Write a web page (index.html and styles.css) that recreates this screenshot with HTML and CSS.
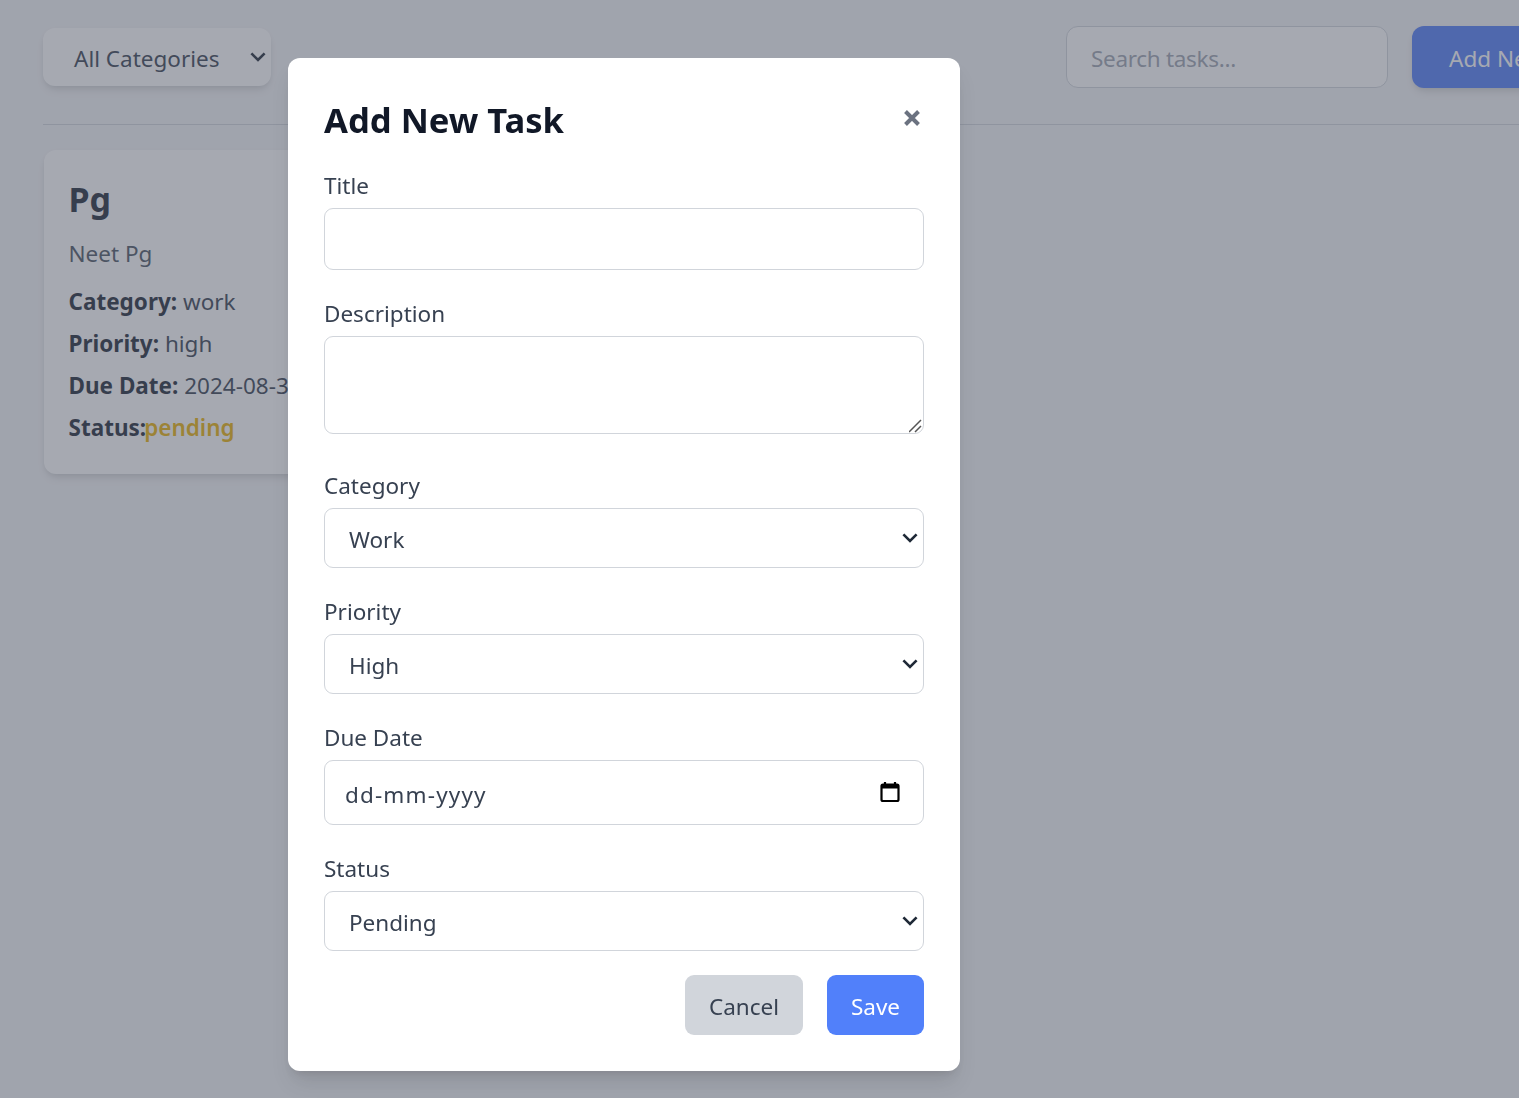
FILE: index.html
```html
<!DOCTYPE html>
<html lang="en">
<head>
<meta charset="UTF-8">
<meta name="viewport" content="width=device-width, initial-scale=1.0">
<title>Task Manager</title>
<link rel="stylesheet" href="styles.css">
</head>
<body>

<div id="app">
    <!-- Toolbar -->
    <div class="toolbar">
        <div class="filter">
            <span>All Categories</span>
            <svg class="chevron" viewBox="0 0 20 20"><path d="M4.500 7l5.500 5.500L15.500 7"/></svg>
        </div>
        <div class="toolbar-right">
            <input class="search" type="text" placeholder="Search tasks...">
            <button class="add-btn">Add New Task</button>
        </div>
    </div>

    <!-- Task list -->
    <div class="task-card">
        <h3>Pg</h3>
        <p class="task-desc">Neet Pg</p>
        <p class="task-line"><strong>Category:</strong> work</p>
        <p class="task-line"><strong>Priority:</strong> high</p>
        <p class="task-line"><strong>Due Date:</strong> 2024-08-31</p>
        <p class="task-line"><strong>Status:</strong><span class="status-pending">pending</span></p>
    </div>
</div>

<!-- Add task modal -->
<div id="modal-overlay">
    <div class="modal">
        <div class="modal-head">
            <h2>Add New Task</h2>
            <svg class="close" viewBox="0 0 18 18"><path d="M2.500 2.500l13 13M15.500 2.500l-13 13"/></svg>
        </div>

        <label for="title">Title</label>
        <input class="field title-field" id="title" type="text">

        <label for="description">Description</label>
        <div class="desc-wrap">
            <textarea class="field desc-field" id="description"></textarea>
            <svg class="resize-grip" viewBox="0 0 14 14"><path d="M0 13L12 1M6 13l6-6"/></svg>
        </div>

        <label>Category</label>
        <div class="select-box">
            <span>Work</span>
            <svg class="chevron" viewBox="0 0 20 20"><path d="M4.500 7l5.500 5.500L15.500 7"/></svg>
        </div>

        <label>Priority</label>
        <div class="select-box">
            <span>High</span>
            <svg class="chevron" viewBox="0 0 20 20"><path d="M4.500 7l5.500 5.500L15.500 7"/></svg>
        </div>

        <label>Due Date</label>
        <div class="date-box">
            <span class="date-text">dd-mm-yyyy</span>
            <svg class="calendar" viewBox="0 0 20 22"><path d="M5 1v3M15 1v3" class="cal-pin"/><rect x="1.500" y="3.500" width="17" height="16.500" rx="1.500" class="cal-body"/><rect x="1.500" y="3.500" width="17" height="4" class="cal-top"/></svg>
        </div>

        <label>Status</label>
        <div class="select-box">
            <span>Pending</span>
            <svg class="chevron" viewBox="0 0 20 20"><path d="M4.500 7l5.500 5.500L15.500 7"/></svg>
        </div>

        <div class="modal-actions">
            <button class="btn-cancel">Cancel</button>
            <button class="btn-save">Save</button>
        </div>
    </div>
</div>

</body>
</html>
```

FILE: styles.css
```css
* {
box-sizing: border-box;
}
html, body {
height: 100%;
}
body {
margin: 0;
background-color: #f3f4f6;
color: #374151;
font-family: "Noto Sans", "Open Sans", sans-serif;
font-size: 22.5px;
overflow: hidden;
}
input, textarea, button {
font-family: inherit;
font-size: inherit;
}
#app {
width: 1692px;
padding: 26px 44px;
}
.toolbar {
display: flex;
justify-content: space-between;
align-items: center;
padding-bottom: 36px;
border-bottom: 1px solid #d1d5db;
margin-bottom: 25px;
margin-left: -1px;
}
.filter {
display: flex;
align-items: center;
justify-content: space-between;
width: 228px;
height: 58px;
padding: 2px 1px 0 31px;
background-color: #fff;
border-radius: 12px;
box-shadow: 0 6px 9px -2px rgba(0,0,0,0.1), 0 2px 6px -2px rgba(0,0,0,0.1);
}
.toolbar-right {
display: flex;
gap: 24px;
margin-left: auto;
}
.search {
width: 322px;
height: 62px;
padding: 2px 24px 0;
border: 1px solid #d1d5db;
border-radius: 12px;
background-color: #fff;
}
.search::placeholder {
color: #9ca3af;
letter-spacing: -0.3px;
}
.add-btn {
width: 236px;
height: 62px;
padding: 2px 37px 0;
text-align: left;
white-space: nowrap;
background-color: #517df7;
color: #fff;
border: none;
border-radius: 12px;
box-shadow: 0 6px 9px -2px rgba(0,0,0,0.1), 0 2px 6px -2px rgba(0,0,0,0.1);
}
.task-card {
width: 420px;
height: 324px;
padding: 22px 24px 22px 24.5px;
background-color: #fff;
border-radius: 12px;
box-shadow: 0 6px 9px -2px rgba(0,0,0,0.1), 0 2px 6px -2px rgba(0,0,0,0.1);
}
.task-card h3 {
margin: 0 0 10px 0;
font-size: 34px;
line-height: 54px;
font-weight: 700;
color: #1f2937;
}
.task-card p {
margin: 0;
line-height: 36px;
}
.task-card strong {
color: #1f2937;
}
.task-desc {
color: #4b5563;
margin-bottom: 12px !important;
}
.task-line {
margin-bottom: 6px !important;
}
.status-pending {
margin-left: -2px;
color: #eab308;
font-weight: 600;
}
#modal-overlay {
position: fixed;
top: 0;
left: 0;
right: 0;
bottom: 0;
padding: 58px 0 0 288px;
background-color: rgba(77,83,100,0.5);
}
.modal {
width: 672px;
height: 1013px;
padding: 36px;
background-color: #fff;
border-radius: 12px;
box-shadow: 0 15px 22px -4px rgba(0,0,0,0.1), 0 6px 9px -4px rgba(0,0,0,0.1);
}
.modal-head {
display: flex;
justify-content: space-between;
align-items: flex-start;
height: 48px;
margin-bottom: 24px;
}
.modal-head h2 {
margin: 0;
font-size: 34.6px;
line-height: 52px;
font-weight: 700;
color: #111827;
}
.close {
width: 18px;
height: 18px;
margin: 15px 3px 0 0;
fill: none;
stroke: #6b7280;
stroke-width: 4;
}
label {
display: block;
height: 36px;
line-height: 40px;
margin-bottom: 6px;
}
.field {
display: block;
width: 100%;
border: 1px solid #d1d5db;
border-radius: 9px;
background-color: #fff;
outline: none;
}
.title-field {
height: 62px;
margin-bottom: 24px;
}
.desc-wrap {
position: relative;
margin-bottom: 32px;
}
.desc-field {
height: 98px;
resize: none;
}
.resize-grip {
position: absolute;
right: 1px;
bottom: 1px;
width: 14px;
height: 14px;
fill: none;
stroke: #555;
stroke-width: 1.5;
}
.select-box, .date-box {
display: flex;
align-items: center;
justify-content: space-between;
width: 100%;
height: 60px;
margin-bottom: 24px;
padding: 2px 1px 0 24px;
border: 1px solid #d1d5db;
border-radius: 9px;
color: #374151;
}
.date-box {
height: 65px;
padding: 3px 23px 0 20px;
}
.date-text {
letter-spacing: 1.15px;
}
.chevron {
width: 24px;
height: 24px;
margin-top: -2px;
flex: none;
fill: none;
stroke: #1f2937;
stroke-width: 2.2;
}
.calendar {
width: 20px;
height: 22px;
margin-top: -4px;
flex: none;
}
.cal-pin, .cal-body {
fill: none;
stroke: #000;
stroke-width: 2.2;
}
.cal-top {
fill: #000;
}
.modal-actions {
display: flex;
justify-content: flex-end;
gap: 24px;
}
.modal-actions button {
height: 60px;
padding: 2px 0 0;
border: none;
border-radius: 9px;
}
.btn-cancel {
width: 118px;
background-color: #d1d5db;
color: #374151;
}
.btn-save {
width: 97px;
background-color: #5180fa;
color: #fff;
}
```
